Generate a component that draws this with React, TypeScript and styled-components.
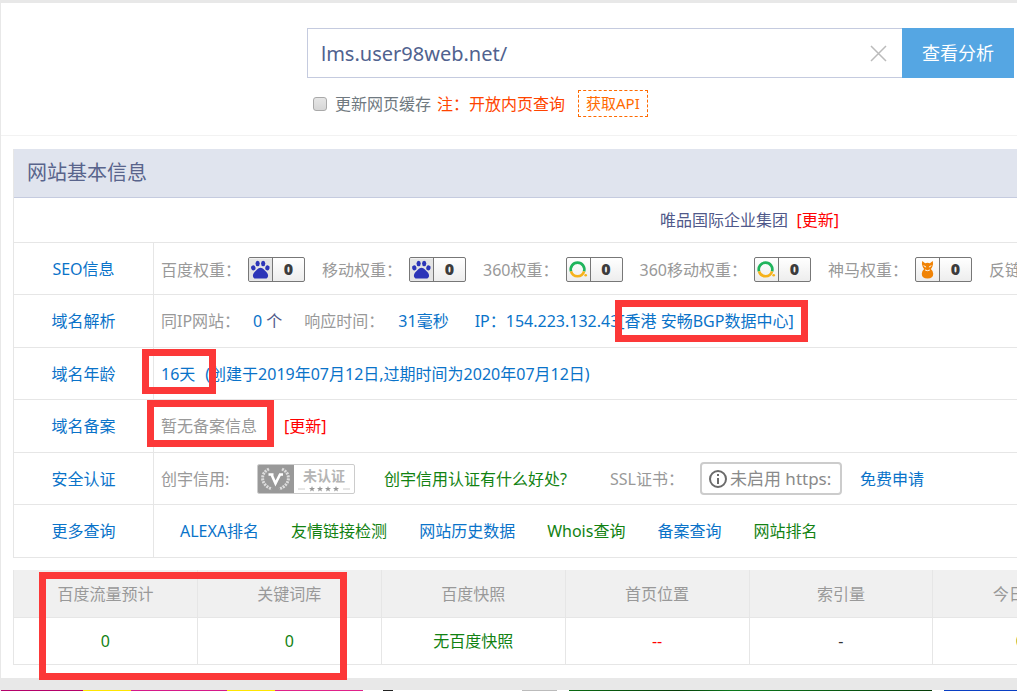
import React from "react";
import styled, { createGlobalStyle } from "styled-components";

const GlobalStyle = createGlobalStyle`
  *, *::before, *::after { box-sizing: border-box; }
  body {
    margin: 0;
    background: #fff;
    color: #50598a;
    font: 16px/24px "Noto Sans", "Noto Sans CJK SC", sans-serif;
    overflow: hidden;
  }
  button, input { font: inherit; }
  a { text-decoration: none; }
`;

const line = "#e6e6e6";

const Page = styled.div`
  position: relative;
  overflow: hidden;
  padding: 3px 0 0 1px;
  background: #e8e8e8;
`;

const Sheet = styled.main`
  background: #fff;
  padding-bottom: 13px;
`;

const SearchArea = styled.header`
  padding: 25px 3px 18px 306px;
  border-bottom: 1px solid #f2f2f2;
`;

const SearchForm = styled.form`
  display: flex;
  height: 50px;
`;

const SearchField = styled.div`
  flex: 1;
  display: flex;
  align-items: center;
  padding-right: 15px;
  border: 1px solid #c5cbdf;
  border-right: 0;
`;

const SearchInput = styled.input`
  flex: 1;
  min-width: 0;
  height: 100%;
  padding: 0 13px;
  border: 0;
  outline: 0;
  background: none;
  color: #50628f;
  font-size: 20px;
`;

const ClearButton = styled.button`
  display: flex;
  padding: 0;
  border: 0;
  background: none;
`;

const SubmitButton = styled.button`
  width: 112px;
  padding: 0;
  border: 0;
  background: #55a6e3;
  color: #fff;
  font-size: 18px;
`;

const Options = styled.div`
  display: flex;
  align-items: center;
  height: 27px;
  margin-top: 12px;
  padding-left: 6px;
`;

const CacheLabel = styled.label`
  display: flex;
  align-items: center;
  gap: 8px;
  color: #6f7980;
`;

const CacheBox = styled.input`
  appearance: none;
  width: 14px;
  height: 14px;
  margin: 0;
  border: 1px solid #a9a9a9;
  border-radius: 3px;
  background: linear-gradient(#e6e6e6, #d6d6d6);
`;

const Note = styled.span`
  margin: 0 13px 0 6px;
  color: #ff4400;
`;

const ApiButton = styled.a`
  padding: 0 7px;
  border: 1px dashed #ff6a00;
  color: #ff6a00;
  font-size: 15px;
  line-height: 25px;
`;

const Board = styled.section`
  width: 1472px;
  min-width: 100%;
  margin: 13px 0 0 12px;
  border-left: 1px solid ${line};
`;

const BoardTitle = styled.h1`
  margin: 0;
  padding: 0 13px;
  height: 49px;
  border-bottom: 1px solid #c5cbdf;
  background: #e0e4ee;
  color: #59648c;
  font-size: 20px;
  font-weight: 400;
  line-height: 48px;
`;

const Company = styled.div`
  height: 45px;
  border-bottom: 1px solid ${line};
  line-height: 44px;
  text-align: center;
`;

const InfoTable = styled.table`
  width: 100%;
  table-layout: fixed;
  border-spacing: 0;
  tr { height: 52px; }
  tr:nth-child(even) { height: 53px; }
  th, td {
    padding: 0;
    border-bottom: 1px solid ${line};
  }
  th {
    width: 140px;
    border-right: 1px solid ${line};
    font-weight: 400;
  }
`;

const Cells = styled.div<{ $gap?: number; $indent?: number }>`
  display: flex;
  align-items: center;
  gap: ${(p) => p.$gap ?? 0}px;
  padding-left: ${(p) => p.$indent ?? 7}px;
  white-space: nowrap;
`;

const Key = styled.span<{ $width?: number }>`
  width: ${(p) => (p.$width ? `${p.$width}px` : "auto")};
  color: #999;
`;

const tones = { blue: "#0a73c9", green: "#128212", red: "#ff0000" };

const TextLink = styled.a<{ $tone?: keyof typeof tones }>`
  color: ${(p) => tones[p.$tone ?? "blue"]};
`;

const RankItem = styled.span`
  display: flex;
  align-items: center;
  gap: 7px;
  padding-top: 2px;
  color: #999;
`;

const RankBadge = styled.span`
  display: flex;
  width: 57px;
  height: 25px;
  border: 1px solid #777;
  border-radius: 2px;
  background: linear-gradient(#fff, #ededed);
  color: #3c3c3c;
  font-weight: 700;
  line-height: 23px;
  text-align: center;
  svg { flex: none; width: 24px; height: 23px; border-right: 1px solid #777; }
  b { flex: 1; }
`;

const CreditBadge = styled.a`
  display: flex;
  width: 98px;
  height: 30px;
  border: 1px solid #ccc;
  border-radius: 2px;
  color: #b5b5b5;
  overflow: hidden;
  svg { display: block; }
`;

const CreditText = styled.span`
  flex: 1;
  font-size: 14px;
  font-weight: 700;
  line-height: 20px;
  text-align: center;
  padding-top: 1px;
  svg { margin: 0 auto; }
`;

const SslBadge = styled.a`
  display: flex;
  align-items: center;
  gap: 3px;
  width: 142px;
  height: 33px;
  padding-left: 7px;
  border: 2px solid #ccc;
  border-radius: 4px;
  color: #8a8a8a;
  font-size: 17px;
`;

const Stats = styled.table`
  width: 1472px;
  min-width: 100%;
  margin: 12px 0 0 12px;
  table-layout: fixed;
  border-spacing: 0;
  border-left: 1px solid ${line};
  text-align: center;
  th, td {
    height: 47px;
    padding: 0;
    border-right: 1px solid ${line};
    border-bottom: 1px solid ${line};
  }
  th {
    height: 48px;
    background: #f0f0f0;
    color: #999;
    font-weight: 400;
  }
`;

const Value = styled.span<{ $color: string }>`
  color: ${(p) => p.$color};
`;

const Banners = styled.footer`
  display: flex;
  gap: 12px;
  height: 1px;
  margin-top: 12px;
  background: #fff;
`;

const Banner = styled.div<{ $width?: number; $fill: string }>`
  flex: ${(p) => (p.$width ? `0 0 ${p.$width}px` : "1")};
  background: ${(p) => p.$fill};
`;

const Marker = styled.div<{ $x: number; $y: number; $w: number; $h: number }>`
  position: absolute;
  left: ${(p) => p.$x}px;
  top: ${(p) => p.$y}px;
  width: ${(p) => p.$w}px;
  height: ${(p) => p.$h}px;
  border: 7px solid #fc3838;
  pointer-events: none;
`;

const Paw = () => (
  <svg viewBox="0 0 24 23">
    <rect width="24" height="23" fill="#e4e4e4" />
    <g fill="#2c35b8">
      <ellipse cx="4.500" cy="9.800" rx="2.300" ry="2.600" transform="rotate(-18 4.500 9.800)" />
      <ellipse cx="9" cy="5.200" rx="2.200" ry="2.800" />
      <ellipse cx="14.800" cy="5.200" rx="2.200" ry="2.800" />
      <ellipse cx="19.200" cy="9.800" rx="2.300" ry="2.600" transform="rotate(18 19.200 9.800)" />
      <path d="M12 9.600c2.900 0 4 2.500 5.900 4.200 3 2.800 2.600 7-.9 7.200H7c-3.500-.2-3.900-4.400-.9-7.200C8 12.100 9.100 9.600 12 9.600z" />
    </g>
  </svg>
);

const Ring = () => (
  <svg viewBox="0 0 24 23" fill="none" strokeWidth="2.800">
    <path d="M4.200 13.500A7.100 7.100 0 1 1 17.800 13.500" stroke="#1fb45c" />
    <path d="M4.200 13.500A7.100 7.100 0 0 0 17.800 13.500" stroke="#f6b21b" />
    <circle cx="19.500" cy="17.500" r="1.400" fill="#f6b21b" />
  </svg>
);

const Horse = () => (
  <svg viewBox="0 0 24 23">
    <path
      fill="#f08306"
      d="M6.500 2.500l3 2.500q2.500-1 5 0l3-2.500q1 3.500-.500 6-.500 1.500-1.500 2.500 2.500 2 2.500 5 0 5-6 5t-6-5q0-3 2.500-5Q7.500 10 7 8.500 5.500 6 6.500 2.500z"
    />
    <path fill="none" stroke="#fff" strokeWidth="1" d="M8 7.500l2.500 1.500M16 7.500L13.500 9M9.500 12q2.500 1.500 5 0" />
  </svg>
);

const Laurel = () => (
  <svg width="36" height="28" viewBox="0 0 36 28">
    <rect width="36" height="28" fill="#999" />
    <g fill="none" stroke="#ddd" strokeWidth="3" strokeDasharray="2 1">
      <path d="M11 4C2 8 2 20 14 24" />
      <path d="M24 4c9 4 9 16-3 20" />
    </g>
    <path d="M10.500 9.500h5M13.500 9.500l4 9L22 9.500h3" fill="none" stroke="#fff" strokeWidth="2.600" />
  </svg>
);

const Stars = () => (
  <svg width="54" height="6" viewBox="0 0 54 6">
    <path d="M1 3h7M46 3h7" stroke="#ccc" />
    {[15, 23, 31, 39].map((x) => (
      <path key={x} transform={`translate(${x} 3)`} fill="#999" d="M0-3l.8 2H3L1.300.400 2 2.600 0 1.300-2 2.600-1.300.400-3-1h2.200z" />
    ))}
  </svg>
);

const ranks = [
  { name: "百度权重：", Icon: Paw },
  { name: "移动权重：", Icon: Paw },
  { name: "360权重：", Icon: Ring },
  { name: "360移动权重：", Icon: Ring },
  { name: "神马权重：", Icon: Horse },
];

const queries: [string, keyof typeof tones][] = [
  ["ALEXA排名", "blue"],
  ["友情链接检测", "green"],
  ["网站历史数据", "blue"],
  ["Whois查询", "green"],
  ["备案查询", "blue"],
  ["网站排名", "green"],
];

const stats = [
  { name: "百度流量预计", value: "0", color: tones.green },
  { name: "关键词库", value: "0", color: tones.green },
  { name: "百度快照", value: "无百度快照", color: tones.green },
  { name: "首页位置", value: "--", color: tones.red },
  { name: "索引量", value: "-", color: "#333" },
  { name: "今日收录", value: "00", color: tones.green },
];

const InfoRow = ({ name, children }: { name: string; children: React.ReactNode }) => (
  <tr>
    <th scope="row">
      <TextLink href="#">{name}</TextLink>
    </th>
    <td>{children}</td>
  </tr>
);

export default function App() {
  return (
    <Page>
      <GlobalStyle />
      <Sheet>
        <SearchArea>
          <SearchForm onSubmit={(e) => e.preventDefault()}>
            <SearchField>
              <SearchInput aria-label="域名" defaultValue="lms.user98web.net/" />
              <ClearButton type="button" aria-label="清除">
                <svg width="17" height="17" viewBox="0 0 17 17" stroke="#bbb" strokeWidth="1.500">
                  <path d="M1 1l15 15M16 1L1 16" />
                </svg>
              </ClearButton>
            </SearchField>
            <SubmitButton>查看分析</SubmitButton>
          </SearchForm>
          <Options>
            <CacheLabel>
              <CacheBox type="checkbox" />
              更新网页缓存
            </CacheLabel>
            <Note>注：开放内页查询</Note>
            <ApiButton href="#">获取API</ApiButton>
          </Options>
        </SearchArea>

        <Board>
          <BoardTitle>网站基本信息</BoardTitle>
          <Company>
            唯品国际企业集团&nbsp; <TextLink href="#" $tone="red">[更新]</TextLink>
          </Company>
          <InfoTable>
            <tbody>
              <InfoRow name="SEO信息">
                <Cells $gap={17}>
                  {ranks.map(({ name, Icon }) => (
                    <RankItem key={name}>
                      {name}
                      <RankBadge>
                        <Icon />
                        <b>0</b>
                      </RankBadge>
                    </RankItem>
                  ))}
                  <RankItem>反链</RankItem>
                </Cells>
              </InfoRow>
              <InfoRow name="域名解析">
                <Cells>
                  <Key $width={92}>同IP网站：</Key>
                  <span>
                    <TextLink href="#">0</TextLink> 个
                  </span>
                  <Cells $indent={22}>
                    <Key $width={94}>响应时间：</Key>
                    <TextLink href="#">31毫秒</TextLink>
                  </Cells>
                  <Cells $indent={26}>
                    <TextLink href="#">IP：154.223.132.43[香港 安畅BGP数据中心]</TextLink>
                  </Cells>
                </Cells>
              </InfoRow>
              <InfoRow name="域名年龄">
                <Cells $gap={10}>
                  <TextLink href="#">16天</TextLink>
                  <TextLink href="#">(创建于2019年07月12日,过期时间为2020年07月12日)</TextLink>
                </Cells>
              </InfoRow>
              <InfoRow name="域名备案">
                <Cells>
                  <Key $width={123}>暂无备案信息</Key>
                  <TextLink href="#" $tone="red">[更新]</TextLink>
                </Cells>
              </InfoRow>
              <InfoRow name="安全认证">
                <Cells>
                  <Key $width={96}>创宇信用:</Key>
                  <CreditBadge href="#">
                    <Laurel />
                    <CreditText>
                      未认证
                      <Stars />
                    </CreditText>
                  </CreditBadge>
                  <Cells $indent={29}>
                    <TextLink href="#" $tone="green">创宇信用认证有什么好处?</TextLink>
                  </Cells>
                  <Cells $indent={43}>
                    <Key $width={90}>SSL证书：</Key>
                    <SslBadge href="#">
                      <svg width="18" height="18" viewBox="0 0 18 18" fill="none" stroke="#6b6b6b" strokeWidth="2">
                        <circle cx="9" cy="9" r="8" />
                        <path d="M9 8v6M9 4v2" />
                      </svg>
                      未启用 https:
                    </SslBadge>
                  </Cells>
                  <Cells $indent={18}>
                    <TextLink href="#">免费申请</TextLink>
                  </Cells>
                </Cells>
              </InfoRow>
              <InfoRow name="更多查询">
                <Cells $gap={32} $indent={26}>
                  {queries.map(([name, tone]) => (
                    <TextLink key={name} href="#" $tone={tone}>
                      {name}
                    </TextLink>
                  ))}
                </Cells>
              </InfoRow>
            </tbody>
          </InfoTable>
        </Board>

        <Stats>
          <thead>
            <tr>
              {stats.map((s) => (
                <th key={s.name} scope="col">{s.name}</th>
              ))}
              <th colSpan={2} />
            </tr>
          </thead>
          <tbody>
            <tr>
              {stats.map((s) => (
                <td key={s.name}>
                  <Value $color={s.color}>{s.value}</Value>
                </td>
              ))}
              <td colSpan={2} />
            </tr>
          </tbody>
        </Stats>
      </Sheet>

      <Banners>
        <Banner
          $width={556}
          $fill="linear-gradient(90deg, #b5006a 82px, #ffe600 82px 130px, #d6188a 130px 226px, #ffe600 226px 274px, #e0218a 274px 362px, #fff 362px 382px, #222 382px 392px, #fff 392px 521px, #bbb 521px)"
        />
        <Banner $width={363} $fill="linear-gradient(90deg, #0a6b12, #063d08 30%, #0b7a1c 45%, #063d08)" />
        <Banner $fill="#0a3fc4" />
      </Banners>

      <Marker $x={615} $y={300} $w={193} $h={42} />
      <Marker $x={142} $y={349} $w={74} $h={45} />
      <Marker $x={147} $y={400} $w={127} $h={47} />
      <Marker $x={39} $y={572} $w={308} $h={108} />
    </Page>
  );
}
